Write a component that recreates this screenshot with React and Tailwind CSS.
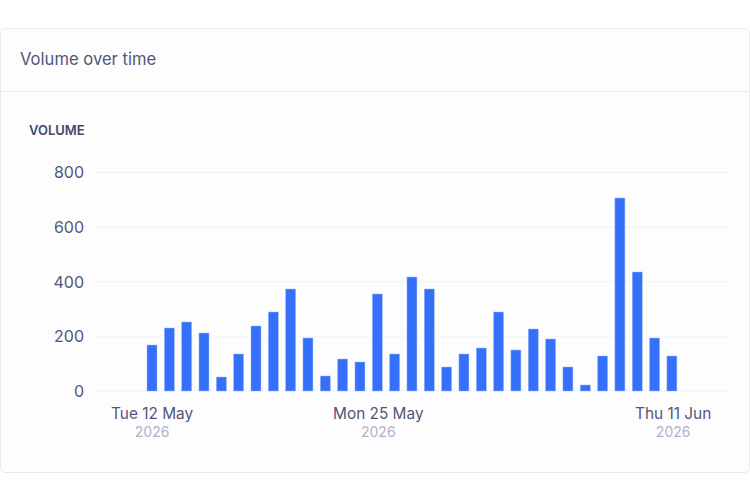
const tops = [345,328,322,333,377,354,326,312,289,338,376,359,362,294,354,277,289,367,354,348,312,350,329,339,367,385,356,198,272,338,356];
const yTicks = ["800","600","400","200","0"];
const gridY = [0.5,55.1,109.6,164.2,218.8];
const xLabels = [
  { day: "Tue 12 May", cls: "w-[222px]" },
  { day: "Mon 25 May", cls: "w-[302px]" },
  { day: "Thu 11 Jun", cls: "w-[77px]" },
];

export default function App() {
  return (
    <div className="h-[500px] w-[750px] bg-white pt-[28px] font-['Inter',sans-serif]">
      <div className="h-[445px] w-[750px] rounded-[5px] border border-[#e9e9f4] bg-[#fdfdfe]">
        <div className="flex h-[63px] items-center border-b border-[#e9e9f4] pb-[2px] pl-[19px] text-[16.6px] text-[#53567a]">
          Volume over time
        </div>
        <div className="pl-[28px] pt-[29px]">
          <div className="h-[18px] text-[13px] leading-[18px] font-semibold text-[#44476a]">VOLUME</div>
          <div className="mt-[33px] flex">
            <div className="flex h-[219px] w-[55px] flex-col justify-between text-right text-[16px] leading-[0] text-[#53567a]">
              {yTicks.map((t) => (
                <span key={t} className="block h-0">{t}</span>
              ))}
            </div>
            <svg className="ml-[11px] block" width="640" height="220" viewBox="0 0 640 220">
              {gridY.map((y) => (
                <line key={y} x1="0" x2="635" y1={y} y2={y} stroke="#f1f1f9" strokeWidth="1" />
              ))}
              {tops.map((t, i) => {
                const x = 147 + i * 17.33 - 95;
                const y = t - 172;
                return <rect key={i} x={x} y={y} width="10" height={219 - y} fill="#3470fa" stroke="#9db9fb" strokeWidth="0.5" />;
              })}
            </svg>
          </div>
          <div className="mt-[13px] flex pl-[82px]">
            {xLabels.map((l) => (
              <div key={l.day} className={l.cls}>
                <div className="w-fit text-center text-[15.4px] leading-[18px] whitespace-nowrap text-[#53567a]">
                  {l.day}
                  <div className="text-[14px] leading-[18px] text-[#b0b2c8]">2026</div>
                </div>
              </div>
            ))}
          </div>
        </div>
      </div>
    </div>
  );
}
